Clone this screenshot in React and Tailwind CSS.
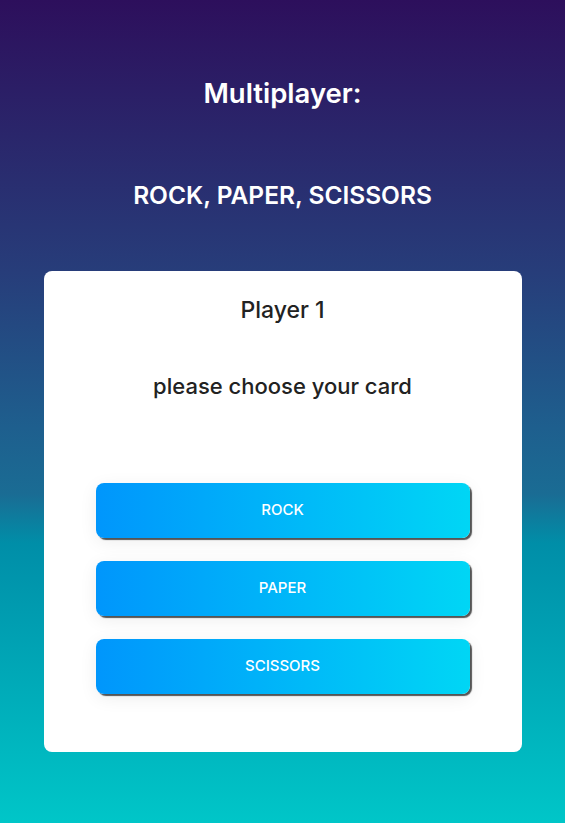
export default function App() {
  const cards = ["ROCK", "PAPER", "SCISSORS"];
  return (
    <div
      className="min-h-[823px] w-full flex flex-col items-center bg-[linear-gradient(to_bottom,#2d0f5c_0%,#273d7a_33%,#1e5f8e_52%,#1a6c94_60%,#008ea8_66%,#00c6c8_100%)]"
      style={{ fontFamily: "Inter, 'Noto Sans', sans-serif" }}
    >
      <h1 className="mt-[76px] text-[27.5px] leading-[34px] font-semibold text-white">
        Multiplayer:
      </h1>
      <h2 className="mt-[70px] text-[24.5px] leading-[30px] font-semibold text-white">
        ROCK, PAPER, SCISSORS
      </h2>
      <div className="mt-[61px] w-[478px] h-[481px] bg-white rounded-lg flex flex-col items-center">
        <p className="mt-[24px] text-[23px] leading-[30px] font-medium text-[#222]">
          Player 1
        </p>
        <p className="mt-[46px] text-[22px] leading-[30px] font-medium text-[#222]">
          please choose your card
        </p>
        <div className="mt-[82px] flex flex-col gap-[23px]">
          {cards.map((c) => (
            <button
              key={c}
              className="w-[374px] h-[55px] rounded-lg text-white text-[15px] font-medium bg-[linear-gradient(to_right,#0096fc,#00d6f5)] shadow-[2px_2px_1px_#555,0_4px_18px_rgba(0,0,0,0.07)]"
            >
              {c}
            </button>
          ))}
        </div>
      </div>
    </div>
  );
}
